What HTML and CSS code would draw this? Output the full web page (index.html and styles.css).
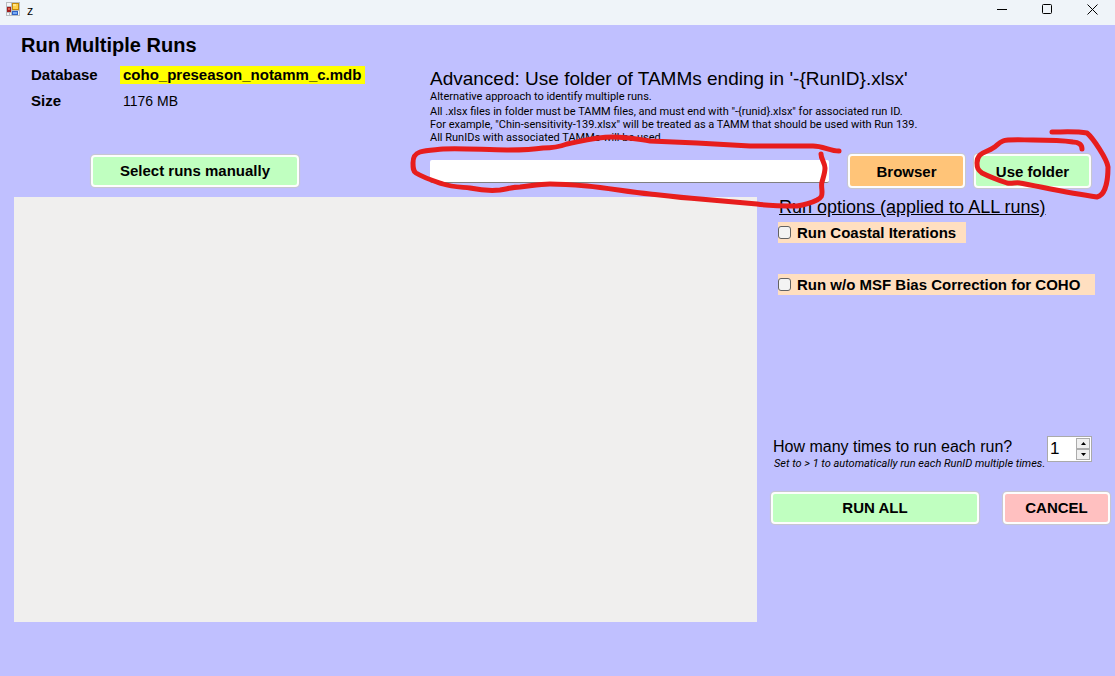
FILE: index.html
```html
<!DOCTYPE html>
<html lang="en">
<head>
<meta charset="utf-8">
<title>Run Multiple Runs</title>
<link rel="stylesheet" href="styles.css">
</head>
<body>
<header class="titlebar">
  <svg class="app-icon" width="14" height="14" viewBox="0 0 14 14" aria-hidden="true">
    <path fill="#b9bdc1" d="M0 0h14v14H0z"/>
    <path fill="#f4f6f8" d="M1 1h4v3H1zM1 11h2v2H1zM4 11h1v2H4zM12 9h1v4h-1z"/>
    <path fill="#a11d1d" d="M1 5h4v5H1z"/><path fill="#e2614f" d="M2 6h2v2H2z"/>
    <path fill="#c58a08" d="M6 1h7v7H6z"/><path fill="#ffd14a" d="M7 2h5v5H7z"/><path fill="#ffe58c" d="M7 2h3v2H7z"/>
    <path fill="#2f62c4" d="M6 9h6v4H6z"/><path fill="#78aaf5" d="M7 10h4v2H7z"/>
  </svg>
  <span class="title">z</span>
  <div class="window-controls">
    <button class="window-button" aria-label="Minimize"><svg width="11" height="11"><path d="M0 5.5h10"/></svg></button>
    <button class="window-button" aria-label="Maximize"><svg width="11" height="11"><rect x=".5" y=".5" width="9" height="9" rx="1"/></svg></button>
    <button class="window-button" aria-label="Close"><svg width="11" height="11"><path d="M.5.5l10 10M10.500.5l-10 10"/></svg></button>
  </div>
</header>
<main class="form">
  <div class="top">
    <section class="database">
      <h1>Run Multiple Runs</h1>
      <dl class="facts">
        <dt>Database</dt><dd><span class="file">coho_preseason_notamm_c.mdb</span></dd>
        <dt>Size</dt><dd class="size">1176 MB</dd>
      </dl>
      <button class="button green select-runs">Select runs manually</button>
    </section>
    <section class="advanced">
      <h2>Advanced: Use folder of TAMMs ending in '-{RunID}.xlsx'</h2>
      <p class="lead">Alternative approach to identify multiple runs.</p>
      <p>All .xlsx files in folder must be TAMM files, and must end with "-{runid}.xlsx" for associated run ID.<br>For example, "Chin-sensitivity-139.xlsx" will be treated as a TAMM that should be used with Run 139.<br>All RunIDs with associated TAMMs will be used.</p>
      <div class="folder-row">
        <input class="folder" type="text" aria-label="TAMM folder">
        <button class="button orange">Browser</button>
        <button class="button green">Use folder</button>
      </div>
    </section>
  </div>
  <div class="bottom">
    <section class="run-list" aria-label="Selected runs"></section>
    <aside class="options">
      <h3>Run options (applied to ALL runs)</h3>
      <label class="check coastal"><input type="checkbox">Run Coastal Iterations</label>
      <label class="check bias"><input type="checkbox">Run w/o MSF Bias Correction for COHO</label>
      <div class="repeat">
        <div class="repeat-text">
          <label class="question" for="times">How many times to run each run?</label>
          <p class="note">Set to &gt; 1 to automatically run each RunID multiple times.</p>
        </div>
        <div class="spinner">
          <input id="times" type="text" inputmode="numeric" value="1">
          <div class="steps">
            <button aria-label="Increase"><svg width="5" height="3"><path d="M0 3h5L2.500 0z"/></svg></button>
            <button aria-label="Decrease"><svg width="5" height="3"><path d="M0 0h5L2.500 3z"/></svg></button>
          </div>
        </div>
      </div>
      <div class="actions">
        <button class="button green run-all">RUN ALL</button>
        <button class="button pink cancel">CANCEL</button>
      </div>
    </aside>
  </div>
</main>
<svg class="ink" width="1115" height="220" viewBox="0 0 1115 220" aria-hidden="true">
  <path d="M839 151C830 151 823 146 813 146L750 146L697 143L650 141C636 139 628 137 613 137C594 137 582 141 567 144C559 147 551 148 543 148C531 150 519 150 507 150C486 150 464 148 443 149C433 150 426 150 420 152C414 154 413 158 413 163C413 168 413 171 416 173C424 178 434 181 443 184C452 187 461 187 470 188C480 190 490 191 500 190C507 189 513 187 520 187C530 186 540 184 550 184C562 184 575 185 587 186C608 188 629 192 650 194C667 196 683 198 700 199L757 204C770 206 784 206 797 206C804 205 811 203 817 200C822 197 822 196 822 192C822 189 821 185 822 182C823 178 825 173 825 168C825 163 821 159 821 154"/>
  <path d="M1082 149C1082 145 1079 142 1073 142C1060 140 1046 140 1033 140C1022 140 1008 139 1003 141C998 143 997 146 993 148C989 151 983 152 980 155C977 158 977 160 977 163C977 168 978 170 982 173C990 177 998 180 1007 183C1012 184 1016 182 1020 183C1042 187 1068 193 1097 197C1106 195 1108 179 1108 167C1107 159 1093 138 1087 133C1076 131 1063 132 1052 132"/>
</svg>
</body>
</html>
```
FILE: styles.css
```css
* { box-sizing: border-box; }

body {
  display: flex;
  flex-direction: column;
  min-height: 100vh;
  margin: 0;
  background: #c0c0ff;
  color: #000;
  font: 14px/16px "Liberation Sans", Arial, sans-serif;
}

h1, h2, h3, p, dl, dd { margin: 0; }
button, input { font: inherit; color: inherit; }

.titlebar {
  display: flex;
  align-items: flex-start;
  height: 25px;
  padding: 2px 0 0 6px;
  background: #eff4f9;
}
.app-icon { margin-top: 0; }
.title { margin-left: 7px; font: 13px/16px "Open Sans", sans-serif; }
.window-controls { display: flex; margin-left: auto; }
.window-button {
  display: flex;
  justify-content: center;
  width: 45px;
  padding: 2px 0 0;
  border: 0;
  background: none;
}
.window-button svg { fill: none; stroke: #000; }

.form { flex: 1; padding: 10px 5px 54px 14px; }

.top { display: flex; height: 162px; }
.database { width: 416px; }
h1 { padding-left: 7px; font-size: 20px; line-height: 20px; }
.facts {
  display: grid;
  grid-template-columns: 89px 1fr;
  gap: 8px 0;
  margin: 11px 0 45px;
  padding-left: 17px;
  line-height: 18px;
  font-size: 15px;
}
.facts dt { font-weight: bold; }
.file { display: inline-block; padding: 0 4px 0 3px; background: #ff0; font-weight: bold; }
.size { padding-left: 3px; font-size: 14px; }

.button {
  height: 32px;
  padding: 0;
  border: 2px solid #fdfdfd;
  border-radius: 4px;
  box-shadow: 0 0 1px 1px #c8c8cc;
  font-size: 15px;
  font-weight: bold;
}
.green { background: #c0ffc0; }
.orange { background: #ffc478; }
.pink { background: #ffc0c0; }
.select-runs { width: 208px; margin-left: 77px; }

.advanced { flex: 1; padding: 33px 19px 0 0; font: 11px/13px Roboto, "Liberation Sans", sans-serif; }
h2 { font: 19px/22px "Liberation Sans", Arial, sans-serif; }
.lead { margin-bottom: 2px; }
.folder-row { display: flex; align-items: center; gap: 9px; margin-top: 10px; }
.folder {
  flex: 1;
  height: 23px;
  margin-right: 10px;
  border: 0;
  border-bottom: 1px solid #808080;
  border-radius: 2px;
  background: #fff;
}
.folder-row .button { width: 117px; height: 34px; font-family: "Liberation Sans", Arial, sans-serif; }

.bottom { display: flex; gap: 14px; }
.run-list { flex: 1; min-height: 425px; background: #f0efee; }
.options { display: flex; flex-direction: column; align-items: flex-start; width: 339px; }
h3 {
  padding-left: 8px;
  font-size: 18px;
  font-weight: normal;
  line-height: 21px;
  text-decoration: underline;
}
.check {
  display: flex;
  align-items: center;
  gap: 6px;
  height: 21px;
  margin-left: 7px;
  background: #ffdfc0;
  font-size: 15px;
  font-weight: bold;
}
.check input {
  appearance: none;
  width: 13px;
  height: 13px;
  margin: 0 0 1px;
  border: 1px solid #626262;
  border-radius: 3px;
  background: #f3f3f3;
}
.coastal { margin-top: 4px; padding-right: 10px; }
.bias { margin-top: 31px; padding-right: 15px; }
.repeat { display: flex; justify-content: space-between; width: 321px; margin-top: 141px; }
.repeat-text { flex: 1; min-width: 0; }
.question { display: block; padding-left: 2px; font-size: 16px; line-height: 21px; }
.note { padding-left: 3px; font: italic 11px/14px Roboto, "Liberation Sans", sans-serif; white-space: nowrap; }
.spinner { display: flex; flex: none; width: 45px; height: 26px; padding: 1px; border: 1px solid #aaa; background: #fff; }
.spinner input { flex: 1; width: 0; padding: 0 1px; border: 0; background: none; font-size: 17px; }
.steps { display: flex; flex-direction: column; width: 14px; }
.steps button {
  display: flex;
  flex: 1;
  align-items: center;
  justify-content: center;
  min-height: 0;
  padding: 0;
  border: 1px solid #acacac;
  background: #f0f0f0;
}
.actions { display: flex; justify-content: space-between; width: 100%; margin-top: 21px; }
.run-all { width: 208px; }
.cancel { width: 107px; }

.ink {
  position: absolute;
  top: 0;
  left: 0;
  fill: none;
  stroke: #e71d1d;
  stroke-width: 5;
  stroke-linecap: round;
  stroke-linejoin: round;
  pointer-events: none;
}
```
